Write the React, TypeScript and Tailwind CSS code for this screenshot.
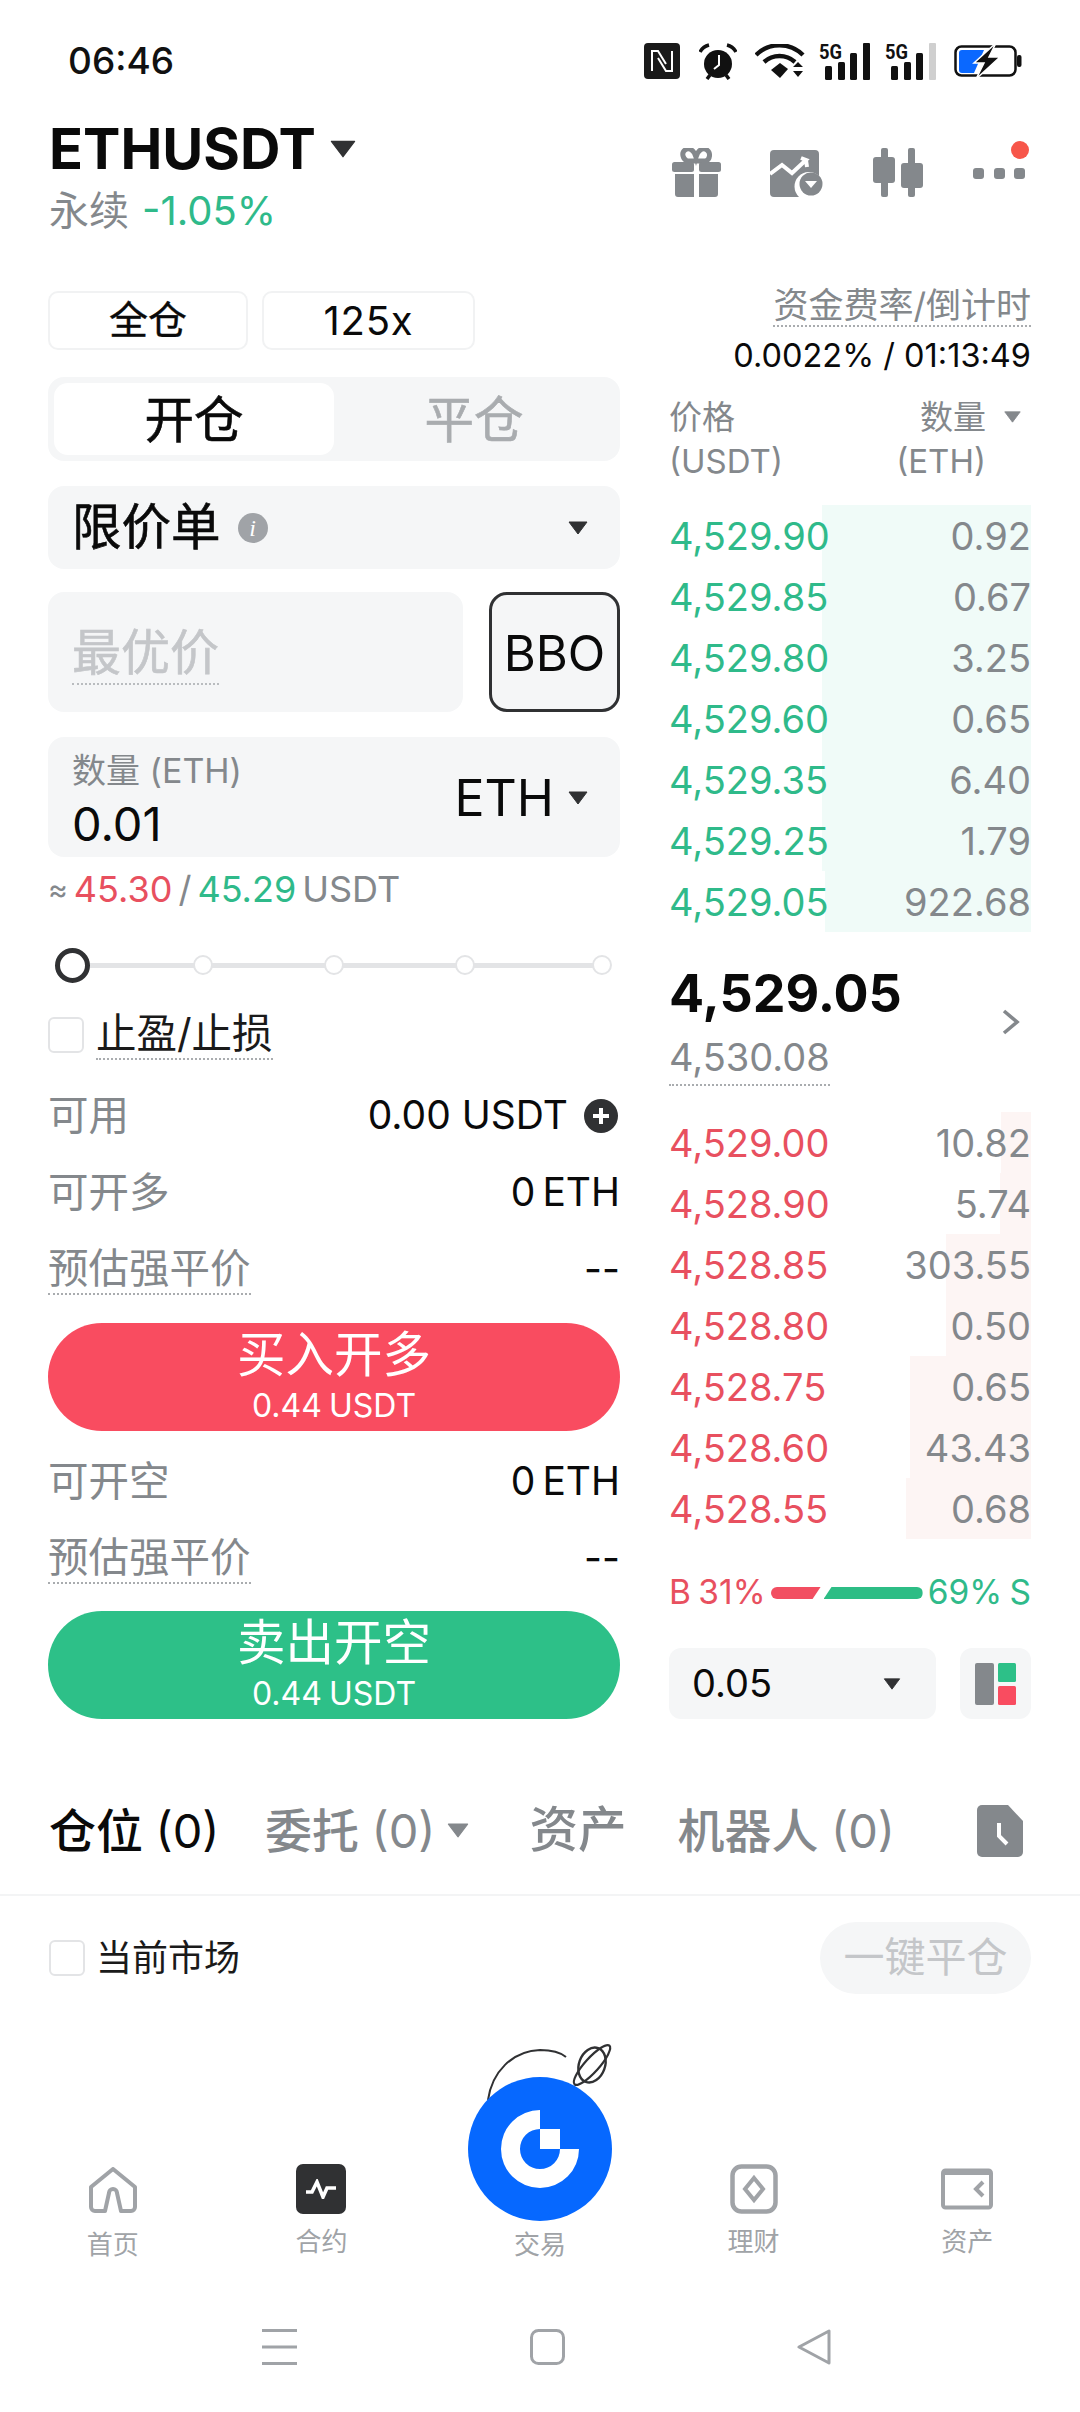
const FONT = "font-['Inter','Noto_Sans_CJK_SC',sans-serif]";

const asks = [
  { price: "4,529.90", qty: "0.92", w: 209 },
  { price: "4,529.85", qty: "0.67", w: 209 },
  { price: "4,529.80", qty: "3.25", w: 209 },
  { price: "4,529.60", qty: "0.65", w: 209 },
  { price: "4,529.35", qty: "6.40", w: 209 },
  { price: "4,529.25", qty: "1.79", w: 209 },
  { price: "4,529.05", qty: "922.68", w: 206 },
];

const bids = [
  { price: "4,529.00", qty: "10.82", w: 30 },
  { price: "4,528.90", qty: "5.74", w: 31 },
  { price: "4,528.85", qty: "303.55", w: 85 },
  { price: "4,528.80", qty: "0.50", w: 85 },
  { price: "4,528.75", qty: "0.65", w: 121 },
  { price: "4,528.60", qty: "43.43", w: 121 },
  { price: "4,528.55", qty: "0.68", w: 125 },
];

function Caret({ className }: { className: string }) {
  return (
    <svg viewBox="0 0 20 14" className={className}>
      <path d="M1 1h18L10 13z" fill="currentColor" stroke="currentColor" strokeLinejoin="round" />
    </svg>
  );
}

function Signal({ last }: { last: string }) {
  return (
    <svg width="52" height="42" viewBox="0 -5 52 42" className="-mt-[5px] block">
      <text x="0" y="16" fontSize="21" fontWeight="700" fill="#111" fontFamily="Roboto, sans-serif" textLength="23" lengthAdjust="spacingAndGlyphs">5G</text>
      <rect x="6" y="23" width="7" height="14" rx="1.5" fill="#111" />
      <rect x="19" y="19" width="7" height="18" rx="1.5" fill="#111" />
      <rect x="31" y="10" width="7" height="27" rx="1.5" fill="#111" />
      <rect x="44" y="0" width="7" height="37" rx="1" fill={last} />
    </svg>
  );
}

function StatusBar() {
  return (
    <div className="flex h-[122px] items-center justify-between pl-[68px] pr-[58px]">
      <span className="text-[37px] font-medium text-[#111]">06:46</span>
      <div className="flex items-center">
        <svg width="36" height="36" viewBox="0 0 36 36" className="mr-[19px]">
          <rect width="36" height="36" rx="4" fill="#1a1a1a" />
          <path d="M8 28V8h6l8 13M28 8v20h-6L14 15" fill="none" stroke="#fff" strokeWidth="2" />
        </svg>
        <svg width="38" height="37" viewBox="0 0 38 37" className="mr-[18px]">
          <circle cx="19" cy="21" r="14" fill="#111" />
          <path d="M1 9c2-4 5-6 9-7M37 9c-2-4-5-6-9-7" fill="none" stroke="#111" strokeWidth="3.5" />
          <path d="M8 36l3-4M30 36l-3-4" stroke="#111" strokeWidth="3.5" />
          <path d="M20 12v10l-5 4" fill="none" stroke="#fff" strokeWidth="2" />
        </svg>
        <svg width="50" height="34" viewBox="0 0 50 34" className="mr-[14px]">
          <path d="M1 11c13-13 34-13 47 0" fill="none" stroke="#111" strokeWidth="4.4" />
          <path d="M9 18c9-8 22-8 31 0" fill="none" stroke="#111" strokeWidth="4.4" />
          <path d="M16 26l9-7 8 6-8 9z" fill="#111" />
          <path d="M38 23h10l-5-5zM38 27h10l-5 6z" fill="#111" />
        </svg>
        <div className="mr-[14px]">
          <Signal last="#111" />
        </div>
        <div className="mr-[17px]">
          <Signal last="#cfcfcf" />
        </div>
        <svg width="68" height="36" viewBox="0 0 68 36">
          <rect x="1.5" y="3.5" width="60" height="29" rx="6" fill="none" stroke="#111" strokeWidth="2.5" />
          <path d="M5 10a3 3 0 0 1 3-3h22L20 30H8a3 3 0 0 1-3-3z" fill="#0a68ff" />
          <rect x="63" y="12" width="4.5" height="12" rx="2" fill="#111" />
          <path d="M42 0L20 20h10l-8 16 24-22H35z" fill="#111" stroke="#fff" strokeWidth="1.5" />
        </svg>
      </div>
    </div>
  );
}

function Header() {
  return (
    <div className="flex h-[163px] items-start justify-between pl-[49px] pr-[55px]">
      <div>
        <div className="-mt-[6px] flex h-[66px] items-center">
          <span className="text-[56px] font-bold leading-none text-[#0a0a0a]">ETHUSDT</span>
          <Caret className="ml-[14px] h-[18px] w-[26px] text-[#303133]" />
        </div>
        <div className="mt-[7px] flex h-[44px] items-center text-[40px] leading-none">
          <span className="text-[#84888c]">永续</span>
          <span className="ml-[13px] text-[#2fba8a]">-1.05%</span>
        </div>
      </div>
      <div className="flex items-start pt-[26px]">
        <svg width="49" height="49" viewBox="0 0 49 49" className="mr-[49px]" fill="#84888c">
          <path d="M13 2c4-3 9 0 11 7 2-7 7-10 11-7 4 3 3 9-1 11H15C11 11 9 5 13 2z" fill="none" stroke="#84888c" strokeWidth="5" />
          <rect y="14" width="22" height="10" rx="2.5" />
          <rect x="27" y="14" width="22" height="10" rx="2.5" />
          <path d="M3 26h19v23H6a3 3 0 0 1-3-3zM27 26h19v20a3 3 0 0 1-3 3H27z" />
        </svg>
        <svg width="54" height="47" viewBox="0 0 54 47" className="mr-[49px] mt-[2px]">
          <path d="M4 0h41a4 4 0 0 1 4 4v22a14 14 0 0 0-20 21H4a4 4 0 0 1-4-4V4a4 4 0 0 1 4-4z" fill="#84888c" />
          <path d="M0 24l12-9 10 8 14-13-5-2M36 10l1 7" fill="none" stroke="#fff" strokeWidth="4" />
          <circle cx="41" cy="34" r="11.5" fill="#84888c" />
          <path d="M35 31h12l-6 7z" fill="#fff" />
        </svg>
        <svg width="50" height="49" viewBox="0 0 50 49" className="mr-[50px]" fill="#84888c">
          <rect x="8" width="7" height="49" rx="2" />
          <rect y="9" width="22" height="26" rx="3" />
          <rect x="35" width="7" height="49" rx="2" />
          <rect x="28" y="15" width="22" height="25" rx="3" />
        </svg>
        <div className="relative mt-[20px] flex w-[52px] justify-between">
          <span className="h-[11px] w-[11px] rounded-[3px] bg-[#84888c]" />
          <span className="h-[11px] w-[11px] rounded-[3px] bg-[#84888c]" />
          <span className="h-[11px] w-[11px] rounded-[3px] bg-[#84888c]" />
          <span className="absolute right-[-4px] top-[-27px] h-[18px] w-[18px] rounded-full bg-[#f7564a]" />
        </div>
      </div>
    </div>
  );
}

function Row({ label, value, dotted }: { label: string; value: React.ReactNode; dotted?: boolean }) {
  return (
    <div className="flex h-[77px] items-center justify-between">
      <span className={`text-[40.5px] leading-[48px] text-[#84888c] ${dotted ? "border-b-2 border-dotted border-[#a9acaf]" : ""}`}>
        {label}
      </span>
      {value}
    </div>
  );
}

function ActionButton({ title, color }: { title: string; color: string }) {
  return (
    <div className={`flex h-[108px] flex-col items-center justify-center rounded-full text-white ${color}`}>
      <span className="-mt-[1px] text-[48.5px] leading-[56px]">{title}</span>
      <span className="mt-[3px] text-[32px] leading-[40px] [word-spacing:-2px]">0.44 USDT</span>
    </div>
  );
}

function OrderForm() {
  return (
    <div className="flex w-[572px] flex-col pt-[6px]">
      <div className="flex gap-[14px]">
        <div className="flex h-[59px] w-[200px] items-center justify-center rounded-[10px] border-2 border-[#f1f2f3] text-[39px] text-[#0a0a0a] [-webkit-text-stroke:0.4px_currentColor]">全仓</div>
        <div className="flex h-[59px] w-[213px] items-center justify-center rounded-[10px] border-2 border-[#f1f2f3] text-[40px] tracking-[0.8px] text-[#0a0a0a]">125x</div>
      </div>
      <div className="mt-[27px] flex h-[84px] rounded-[16px] bg-[#f5f6f7] p-[6px]">
        <div className="flex w-[280px] items-center justify-center rounded-[14px] bg-white pt-[2px] text-[49.5px] text-[#0a0a0a] [-webkit-text-stroke:0.6px_currentColor]">开仓</div>
        <div className="flex flex-1 items-center justify-center pt-[2px] text-[49.5px] text-[#a9acaf] [-webkit-text-stroke:0.6px_currentColor]">平仓</div>
      </div>
      <div className="mt-[25px] flex h-[83px] items-center rounded-[16px] bg-[#f5f6f7] pl-[24px] pr-[32px]">
        <span className="text-[49.5px] text-[#0a0a0a] [-webkit-text-stroke:0.6px_currentColor]">限价单</span>
        <span className="ml-[17px] flex h-[30px] w-[30px] items-center justify-center rounded-full bg-[#a0a3a7] font-['Liberation_Serif',serif] text-[24px] italic text-white">i</span>
        <Caret className="ml-auto h-[14px] w-[20px] text-[#303133]" />
      </div>
      <div className="mt-[23px] flex h-[120px] gap-[26px]">
        <div className="flex w-[415px] items-center rounded-[16px] bg-[#f5f6f7] pl-[24px] pt-[3px]">
          <span className="border-b-2 border-dotted border-[#b9bcbf] text-[49px] leading-[60px] text-[#c4c6c9] [-webkit-text-stroke:0.6px_currentColor]">最优价</span>
        </div>
        <div className="flex flex-1 items-center justify-center rounded-[18px] border-[3px] border-[#303133] bg-[#f5f6f7] pt-[3px] text-[49px] text-[#0a0a0a]">BBO</div>
      </div>
      <div className="mt-[25px] flex h-[120px] items-center justify-between rounded-[16px] bg-[#f5f6f7] pl-[24px] pr-[32px]">
        <div className="flex flex-col pt-[5px]">
          <span className="text-[34px] leading-[44px] text-[#84888c]">数量 (ETH)</span>
          <span className="mt-[5px] text-[47px] leading-[52px] text-[#0a0a0a]">0.01</span>
        </div>
        <div className="flex items-center pt-[2px]">
          <span className="text-[50px] text-[#0a0a0a]">ETH</span>
          <Caret className="ml-[14px] h-[14px] w-[20px] text-[#303133]" />
        </div>
      </div>
      <div className="mt-[14px] flex h-[36px] items-center gap-[6px] text-[36px] leading-none">
        <span className="text-[30px] text-[#84888c]">≈</span>
        <span className="text-[#e8505f]">45.30</span>
        <span className="text-[#84888c]">/</span>
        <span className="text-[#2fba8a]">45.29</span>
        <span className="text-[#84888c]">USDT</span>
      </div>
      <div className="relative mt-[40px] flex h-[36px] items-center pl-[7px]">
        <div className="absolute left-[20px] right-[16px] top-[16px] h-[5px] bg-[#e3e4e6]" />
        <span className="relative h-[35px] w-[35px] rounded-full border-[5px] border-[#303133] bg-white" />
        <span className="relative ml-[103px] h-[20px] w-[20px] rounded-full border-2 border-[#e3e4e6] bg-white" />
        <span className="relative ml-[111px] h-[20px] w-[20px] rounded-full border-2 border-[#e3e4e6] bg-white" />
        <span className="relative ml-[111px] h-[20px] w-[20px] rounded-full border-2 border-[#e3e4e6] bg-white" />
        <span className="relative ml-[117px] h-[20px] w-[20px] rounded-full border-2 border-[#e3e4e6] bg-white" />
      </div>
      <div className="mt-[28px] flex h-[48px] items-center">
        <span className="h-[36px] w-[36px] rounded-[6px] border-2 border-[#e3e4e6]" />
        <span className="ml-[12px] border-b-2 border-dotted border-[#a9acaf] text-[40.5px] leading-[48px] text-[#1a1a1a]">止盈/止损</span>
      </div>
      <div className="mt-[18px]">
        <Row
          label="可用"
          value={
            <div className="flex items-center">
              <span className="text-[39px] text-[#0a0a0a]">0.00 USDT</span>
              <span className="ml-[16px] mr-[2px] flex h-[34px] w-[34px] items-center justify-center rounded-full bg-[#303133]">
                <svg width="20" height="20" viewBox="0 0 20 20">
                  <path d="M10 2v16M2 10h16" stroke="#fff" strokeWidth="4" />
                </svg>
              </span>
            </div>
          }
        />
        <Row label="可开多" value={<span className="text-[39px] text-[#0a0a0a] [word-spacing:-4px]">0 ETH</span>} />
        <Row label="预估强平价" dotted value={<span className="text-[39px] text-[#0a0a0a]">--</span>} />
      </div>
      <div className="mt-[15px]">
        <ActionButton title="买入开多" color="bg-[#f94c60]" />
      </div>
      <div className="mt-[12px]">
        <Row label="可开空" value={<span className="text-[39px] text-[#0a0a0a] [word-spacing:-4px]">0 ETH</span>} />
        <Row label="预估强平价" dotted value={<span className="text-[39px] text-[#0a0a0a]">--</span>} />
      </div>
      <div className="mt-[14px]">
        <ActionButton title="卖出开空" color="bg-[#2dc088]" />
      </div>
    </div>
  );
}

function Depth({ price, qty, w, tone }: { price: string; qty: string; w: number; tone: "ask" | "bid" }) {
  return (
    <div className="relative flex h-[61px] items-center justify-between text-[38px] leading-none">
      <div
        className={`absolute bottom-0 right-0 top-0 ${tone === "ask" ? "bg-[#f0fbf8]" : "bg-[#fdf5f4]"}`}
        style={{ width: w }}
      />
      <span className={`relative ${tone === "ask" ? "text-[#2fba8a]" : "text-[#e8505f]"}`}>{price}</span>
      <span className="relative text-[#84888c]">{qty}</span>
    </div>
  );
}

function OrderBook() {
  return (
    <div className="flex w-[362px] flex-col">
      <div className="flex flex-col items-end">
        <span className="h-[42px] border-b-2 border-dotted border-[#a9acaf] text-[35px] leading-[40px] text-[#84888c]">资金费率/倒计时</span>
        <span className="mt-[11px] whitespace-nowrap text-[32.5px] leading-[36px] text-[#0a0a0a]">0.0022% / 01:13:49</span>
      </div>
      <div className="mt-[21px] flex justify-between text-[33px] leading-[44px] text-[#84888c]">
        <div className="flex flex-col">
          <span>价格</span>
          <span>(USDT)</span>
        </div>
        <div className="flex flex-col items-end pr-[9px]">
          <span className="flex items-center">
            数量
            <Caret className="ml-[17px] h-[12px] w-[19px] text-[#84888c]" />
          </span>
          <span className="pr-[36px]">(ETH)</span>
        </div>
      </div>
      <div className="mt-[22px] flex flex-col">
        {asks.map((r) => (
          <Depth key={r.price} {...r} tone="ask" />
        ))}
      </div>
      <div className="mt-[31px] flex h-[149px] items-start justify-between">
        <div className="flex flex-col items-start">
          <span className="text-[52px] font-bold leading-[62px] text-[#0a0a0a]">4,529.05</span>
          <span className="mt-[5px] border-b-2 border-dotted border-[#a9acaf] text-[38px] leading-[54px] text-[#84888c]">4,530.08</span>
        </div>
        <svg width="20" height="26" viewBox="0 0 20 26" className="mr-[10px] mt-[46px]">
          <path d="M3 2l13 11L3 24" fill="none" stroke="#84888c" strokeWidth="3.6" />
        </svg>
      </div>
      <div className="flex flex-col">
        {bids.map((r) => (
          <Depth key={r.price} {...r} tone="bid" />
        ))}
      </div>
      <div className="mt-[36px] flex h-[36px] items-center justify-between text-[33.5px] leading-none">
        <span className="whitespace-nowrap text-[#e8505f] [word-spacing:-2px]">B 31%</span>
        <div className="mx-[5px] flex flex-1 items-center gap-[3px]">
          <span className="h-[12px] w-[50px] rounded-l-full bg-[#f24e61] [clip-path:polygon(0_0,100%_0,84%_100%,0_100%)]" />
          <span className="h-[12px] flex-1 rounded-r-full bg-[#2dbd85] [clip-path:polygon(8%_0,100%_0,100%_100%,0_100%)]" />
        </div>
        <span className="whitespace-nowrap text-[#2fba8a] [word-spacing:-2px]">69% S</span>
      </div>
      <div className="mt-[37px] flex h-[71px] gap-[24px]">
        <div className="flex w-[267px] items-center justify-between rounded-[12px] bg-[#f5f6f7] pl-[23px] pr-[34px]">
          <span className="text-[38px] text-[#0a0a0a]">0.05</span>
          <Caret className="h-[12px] w-[20px] text-[#303133]" />
        </div>
        <div className="flex flex-1 items-center justify-center rounded-[12px] bg-[#f5f6f7]">
          <svg width="41" height="42" viewBox="0 0 41 42">
            <rect width="19" height="42" rx="2" fill="#84888c" />
            <rect x="23" width="18" height="19" rx="1.5" fill="#2dc088" />
            <rect x="23" y="23" width="18" height="19" rx="1.5" fill="#f94c60" />
          </svg>
        </div>
      </div>
    </div>
  );
}

function PositionTabs() {
  return (
    <div className="mt-[72px] border-b-2 border-[#f3f4f5]">
      <div className="flex h-[103px] items-center pb-[24px] pl-[49px] pr-[57px] text-[47px] leading-none text-[#84888c]">
        <span className="w-[216px] shrink-0 font-medium text-[#0a0a0a]">仓位 <span className="font-normal">(0)</span></span>
        <span className="shrink-0 font-medium">委托 <span className="font-normal">(0)</span></span>
        <Caret className="ml-[12px] h-[15px] w-[22px] shrink-0 text-[#84888c]" />
        <span className="ml-[60px] shrink-0 text-[48.5px] font-medium">资产</span>
        <span className="ml-[51px] shrink-0 font-medium">机器人 <span className="font-normal">(0)</span></span>
        <svg width="46" height="52" viewBox="0 0 46 52" className="ml-auto shrink-0">
          <path d="M5 0h26l15 16v31a5 5 0 0 1-5 5H5a5 5 0 0 1-5-5V5a5 5 0 0 1 5-5z" fill="#84888c" />
          <path d="M22 18v13l8 8" fill="none" stroke="#fff" strokeWidth="4" />
        </svg>
      </div>
    </div>
  );
}

function MarketFilter() {
  return (
    <div className="flex items-center justify-between pl-[49px] pr-[49px] pt-[26px]">
      <div className="flex items-center">
        <span className="h-[36px] w-[36px] rounded-[6px] border-2 border-[#e3e4e6]" />
        <span className="ml-[11px] text-[36px] text-[#1a1a1a]">当前市场</span>
      </div>
      <div className="flex h-[72px] w-[211px] items-center justify-center rounded-full bg-[#f5f6f7] text-[41px] text-[#c4c6c9]">一键平仓</div>
    </div>
  );
}

function NavLabel({ text }: { text: string }) {
  return <span className="text-[26px] leading-[32px] text-[#a0a3a7]">{text}</span>;
}

function BottomNav() {
  return (
    <div className="mt-[83px] grid grid-cols-5 items-end px-[6px]">
      <div className="flex flex-col items-center">
        <svg width="48" height="46" viewBox="0 0 48 46">
          <path d="M2 20L24 2l22 18v20a4 4 0 0 1-4 4H32l-4-18a4 4 0 0 0-8 0l-4 18H6a4 4 0 0 1-4-4z" fill="none" stroke="#a0a3a7" strokeWidth="4" strokeLinejoin="round" />
        </svg>
        <div className="mt-[16px]">
          <NavLabel text="首页" />
        </div>
      </div>
      <div className="flex flex-col items-center pb-[3px] pr-[10px]">
        <span className="flex h-[50px] w-[50px] items-center justify-center rounded-[7px] bg-[#303133]">
          <svg width="32" height="20" viewBox="0 0 32 20">
            <path d="M1 13h6l5-10 6 15 4-9h9" fill="none" stroke="#fff" strokeWidth="3.6" />
          </svg>
        </span>
        <div className="mt-[12px]">
          <NavLabel text="合约" />
        </div>
      </div>
      <div className="relative flex flex-col items-center">
        <svg width="130" height="60" viewBox="0 0 130 60" className="absolute left-[55px] top-[-30px] overflow-visible">
          <path d="M0 53C4 25 24 4 52 3 62 3 72 5 78 10" fill="none" stroke="#303133" strokeWidth="2" />
          <ellipse cx="104" cy="18" rx="13" ry="18" transform="rotate(20 104 18)" fill="none" stroke="#303133" strokeWidth="2.4" />
          <ellipse cx="104" cy="18" rx="26" ry="7" transform="rotate(-48 104 18)" fill="none" stroke="#303133" strokeWidth="2.2" />
        </svg>
        <span className="relative flex h-[144px] w-[144px] items-center justify-center rounded-full bg-[#0668ff]">
          <svg width="78" height="78" viewBox="0 0 78 78">
            <path d="M39 0v19a20 20 0 1 0 20 20h19A39 39 0 1 1 39 0z" fill="#fff" />
            <rect x="39" y="19" width="20" height="20" fill="#fff" />
          </svg>
        </span>
        <div className="mt-[8px]">
          <NavLabel text="交易" />
        </div>
      </div>
      <div className="flex flex-col items-center pb-[3px]">
        <svg width="48" height="50" viewBox="0 0 48 50">
          <rect x="2.5" y="2.5" width="43" height="45" rx="9" fill="none" stroke="#a0a3a7" strokeWidth="4.5" />
          <path d="M24 14l9 11-9 11-9-11z" fill="none" stroke="#a0a3a7" strokeWidth="4" />
        </svg>
        <div className="mt-[12px]">
          <NavLabel text="理财" />
        </div>
      </div>
      <div className="flex flex-col items-center pb-[3px]">
        <svg width="52" height="42" viewBox="0 0 52 42" className="mb-[4px]">
          <rect x="2" y="2.5" width="48" height="37" rx="2.5" fill="none" stroke="#a0a3a7" strokeWidth="4" />
          <path d="M2 5.5h48" stroke="#a0a3a7" strokeWidth="3" />
          <path d="M42 14l-7 7 7 7" fill="none" stroke="#a0a3a7" strokeWidth="4" />
        </svg>
        <div className="mt-[12px]">
          <NavLabel text="资产" />
        </div>
      </div>
    </div>
  );
}

function SystemBar() {
  return (
    <div className="mt-[68px] flex items-center pl-[262px]">
      <svg width="35" height="36" viewBox="0 0 35 36">
        <path d="M0 1.5h35M0 18h35M0 34.5h35" stroke="#a0a3a7" strokeWidth="3" />
      </svg>
      <svg width="35" height="36" viewBox="0 0 35 36" className="ml-[233px]">
        <rect x="1.5" y="1.5" width="32" height="33" rx="7" fill="none" stroke="#a0a3a7" strokeWidth="3" />
      </svg>
      <svg width="34" height="36" viewBox="0 0 34 36" className="ml-[232px]">
        <path d="M32 2v32L2 18z" fill="none" stroke="#a0a3a7" strokeWidth="3" strokeLinejoin="round" />
      </svg>
    </div>
  );
}

export default function App() {
  return (
    <div className={`h-[2412px] w-[1080px] overflow-hidden bg-white ${FONT}`}>
      <StatusBar />
      <Header />
      <div className="flex justify-between pl-[48px] pr-[49px]">
        <OrderForm />
        <OrderBook />
      </div>
      <PositionTabs />
      <MarketFilter />
      <BottomNav />
      <SystemBar />
    </div>
  );
}
